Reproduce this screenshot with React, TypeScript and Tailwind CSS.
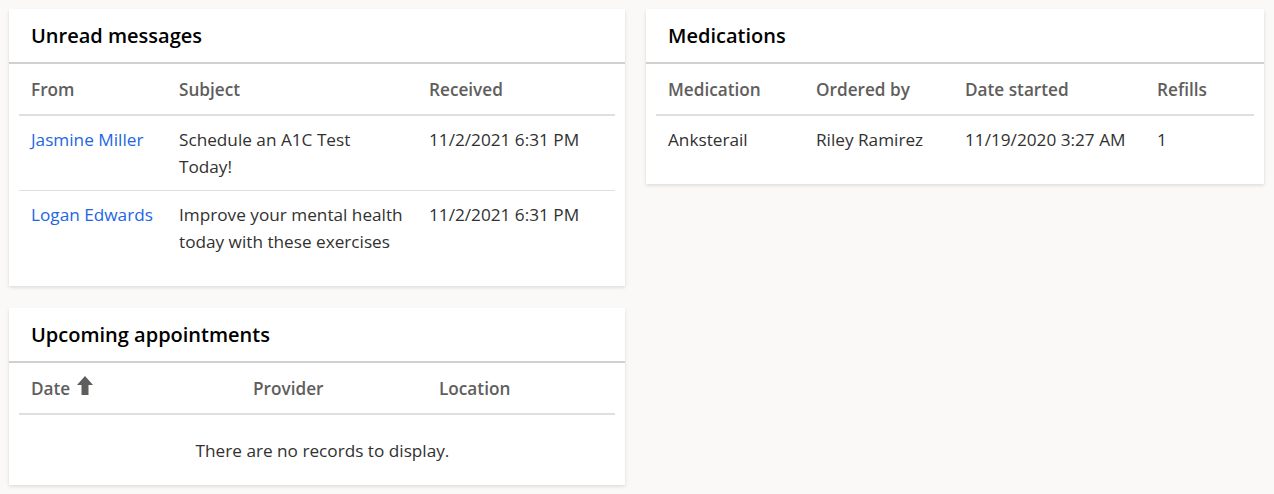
const messages = [
  { from: 'Jasmine Miller', subject: 'Schedule an A1C Test Today!', received: '11/2/2021 6:31 PM' },
  { from: 'Logan Edwards', subject: 'Improve your mental health today with these exercises', received: '11/2/2021 6:31 PM' },
];

const meds = [{ name: 'Anksterail', orderedBy: 'Riley Ramirez', started: '11/19/2020 3:27 AM', refills: '1' }];

function Card({ title, children }: { title: string; children: React.ReactNode }) {
  return (
    <div className="bg-white shadow-[0_1.6px_3.6px_rgba(0,0,0,0.13),0_0.3px_0.9px_rgba(0,0,0,0.11)] pb-[21px]">
      <div className="h-[55px] px-[22px] flex items-center border-b-2 border-[#d2d0ce] text-[20px] font-semibold text-[#000]">
        {title}
      </div>
      <div className="mx-[10px]">{children}</div>
    </div>
  );
}

function HeadCell({ w, children }: { w: string; children: React.ReactNode }) {
  return <div className={`${w} shrink-0 px-[12px] flex items-center gap-[7px]`}>{children}</div>;
}

export default function App() {
  return (
    <div
      className="min-h-screen bg-[#faf9f8] p-[9px] flex items-start gap-[21px] text-[17.2px] leading-[27px] text-[#323130]"
      style={{ fontFamily: '"Segoe UI", "Open Sans", sans-serif' }}
    >
      <div className="w-[616px] flex flex-col gap-[22px]">
        <Card title="Unread messages">
          <div className="h-[52px] flex items-center border-b-2 border-[#e1dfdd] font-semibold text-[#605e5c]">
            <HeadCell w="w-[148px]">From</HeadCell>
            <HeadCell w="w-[250px]">Subject</HeadCell>
            <HeadCell w="flex-1">Received</HeadCell>
          </div>
          {messages.map((m, i) => (
            <div key={i} className={`flex py-[10px] ${i < messages.length - 1 ? 'border-b border-[#e1dfdd]' : ''}`}>
              <div className="w-[148px] shrink-0 px-[12px] text-[#2266e3]">{m.from}</div>
              <div className="w-[250px] shrink-0 pl-[12px] pr-[11px]">{m.subject}</div>
              <div className="flex-1 px-[12px]">{m.received}</div>
            </div>
          ))}
        </Card>

        <Card title="Upcoming appointments">
          <div className="h-[52px] flex items-center border-b-2 border-[#e1dfdd] font-semibold text-[#605e5c]">
            <HeadCell w="w-[222px]">
              Date
              <svg width="16" height="19" viewBox="0 0 16 19" className="-mt-[5px]">
                <path d="M8 0 L16 9 L11.5 9 L11.5 19 L4.5 19 L4.5 9 L0 9 Z" fill="#605e5c" />
              </svg>
            </HeadCell>
            <HeadCell w="w-[186px]">Provider</HeadCell>
            <HeadCell w="flex-1">Location</HeadCell>
          </div>
          <div className="pt-[22px] text-center pl-[11px]">There are no records to display.</div>
        </Card>
      </div>

      <div className="w-[618px]">
        <Card title="Medications">
          <div className="h-[52px] flex items-center border-b-2 border-[#e1dfdd] font-semibold text-[#605e5c]">
            <HeadCell w="w-[148px]">Medication</HeadCell>
            <HeadCell w="w-[149px]">Ordered by</HeadCell>
            <HeadCell w="w-[192px]">Date started</HeadCell>
            <HeadCell w="flex-1">Refills</HeadCell>
          </div>
          {meds.map((m, i) => (
            <div key={i} className="flex py-[10px]">
              <div className="w-[148px] shrink-0 px-[12px]">{m.name}</div>
              <div className="w-[149px] shrink-0 px-[12px]">{m.orderedBy}</div>
              <div className="w-[192px] shrink-0 px-[12px]">{m.started}</div>
              <div className="flex-1 px-[12px]">{m.refills}</div>
            </div>
          ))}
        </Card>
      </div>
    </div>
  );
}
